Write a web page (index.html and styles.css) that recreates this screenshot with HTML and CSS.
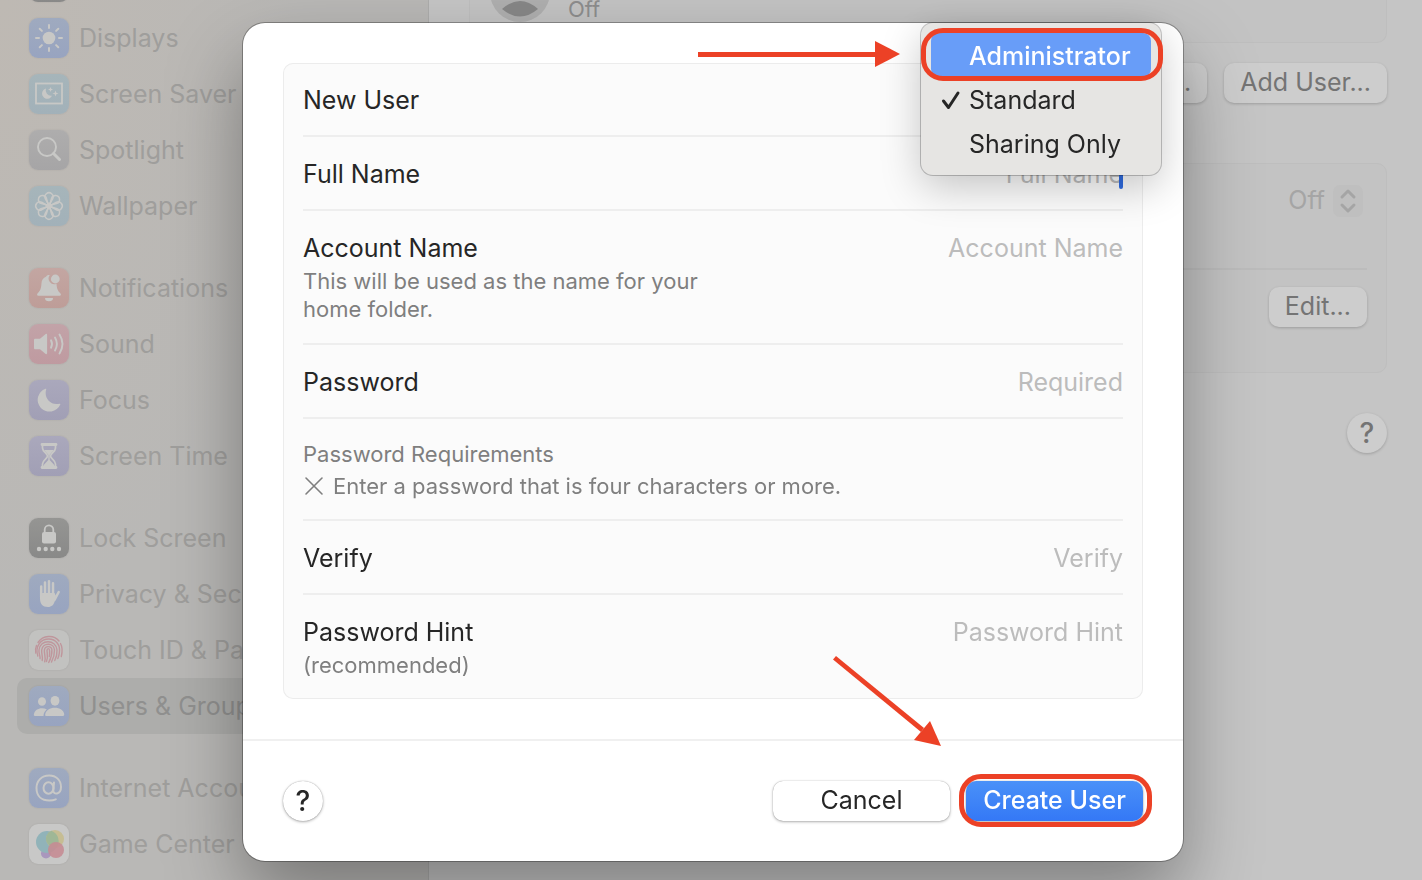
FILE: index.html
```html
<!DOCTYPE html>
<html lang="en">
<head>
  <meta charset="UTF-8">
  <title>Users &amp; Groups</title>
  <link rel="stylesheet" href="styles.css">
</head>
<body>
  <div class="window">
    <!-- Sidebar -->
    <nav class="sidebar">
      <div class="group">
        <a class="item" href="#" aria-label="Dock"><span class="icon dark"></span></a>
        <a class="item" href="#">
          <svg class="icon blue" viewBox="0 0 40 40"><circle cx="20" cy="20" r="6.3" fill="currentColor"/><path d="M20 7v3M20 30v3M7 20h3M30 20h3M10.700 10.700l2.200 2.200M27.100 27.100l2.200 2.200M29.300 10.700l-2.200 2.200M12.900 27.100l-2.200 2.200" stroke="currentColor" stroke-width="2" stroke-linecap="round"/></svg>
          Displays
        </a>
        <a class="item" href="#">
          <svg class="icon cyan" viewBox="0 0 40 40"><rect x="7" y="9.500" width="26" height="20" fill="none" stroke="currentColor" stroke-width="1.800"/><path d="M17 14.500a5.200 5.200 0 1 0 6 7.200a5.400 5.400 0 0 1-6-7.200z" fill="currentColor"/><path d="M21.500 13l.7 1.800 1.800.7-1.800.7-.7 1.800-.7-1.800-1.800-.7 1.800-.7zM26.500 16.500l.8 2.200 2.200.8-2.200.8-.8 2.200-.8-2.200-2.200-.8 2.200-.8z" fill="currentColor"/></svg>
          Screen Saver
        </a>
        <a class="item" href="#">
          <svg class="icon gray" viewBox="0 0 40 40"><circle cx="18" cy="17" r="9" fill="none" stroke="currentColor" stroke-width="1.900"/><path d="M24.500 23.500l6 6" stroke="currentColor" stroke-width="3" stroke-linecap="round"/></svg>
          Spotlight
        </a>
        <a class="item" href="#">
          <svg class="icon cyan" viewBox="0 0 40 40"><g fill="none" stroke="currentColor" stroke-width="1.500"><circle cx="20" cy="20" r="2"/><path id="petal" d="M20 19L16.500 13A4.100 4.100 0 1 1 23.500 13z"/><use href="#petal" transform="rotate(45 20 20)"/><use href="#petal" transform="rotate(90 20 20)"/><use href="#petal" transform="rotate(135 20 20)"/><use href="#petal" transform="rotate(180 20 20)"/><use href="#petal" transform="rotate(225 20 20)"/><use href="#petal" transform="rotate(270 20 20)"/><use href="#petal" transform="rotate(315 20 20)"/></g></svg>
          Wallpaper
        </a>
      </div>
      <div class="group">
        <a class="item" href="#">
          <svg class="icon red" viewBox="0 0 40 40"><path d="M20.800 7.100a5.700 5.700 0 0 0 6.700 8.700c.3 5.200 1.500 7.200 3.600 9.200 1.400 1.400.9 2.800-.6 2.800H9.500c-1.500 0-2-1.400-.6-2.800 2.300-2.300 3.200-4.300 3.500-9 .2-4 1.800-6.300 4.600-7.300.9-1.500 2.300-2.100 3.800-1.600zM16 30h8a4 3.300 0 0 1-8 0z" fill="currentColor"/><circle cx="26.300" cy="11" r="4.400" fill="currentColor"/></svg>
          Notifications
        </a>
        <a class="item" href="#">
          <svg class="icon pink" viewBox="0 0 40 40"><path d="M5 16c0-.8.500-1.300 1.300-1.300H11l5.700-4.600c.7-.5 1.400-.2 1.400.6v18.600c0 .8-.7 1.100-1.400.6L11 25.300H6.300c-.8 0-1.300-.5-1.300-1.300z" fill="currentColor"/><path d="M22 16.300q2 3.700 0 7.400M26 13.500q3.800 6.500 0 13M30.500 10.500q6 9.500 0 19" fill="none" stroke="currentColor" stroke-width="1.900" stroke-linecap="round"/></svg>
          Sound
        </a>
        <a class="item" href="#">
          <svg class="icon indigo" viewBox="0 0 40 40"><path d="M16.500 8.700c.5-.2.900.1.700.7-2.600 8.400 4.100 16.600 13.400 14.300.6-.1.900.3.700.8A11.800 11.800 0 1 1 16.500 8.700z" fill="currentColor"/></svg>
          Focus
        </a>
        <a class="item" href="#">
          <svg class="icon indigo" viewBox="0 0 40 40"><path d="M13 8.500h14M13 31.500h14" stroke="currentColor" stroke-width="2.800" stroke-linecap="round"/><path d="M13.500 9v3c0 4 5 5.500 5 8s-5 4-5 8v3M26.500 9v3c0 4-5 5.500-5 8s5 4 5 8v3" fill="none" stroke="currentColor" stroke-width="1.700"/><path d="M15 14h10l-4.300 4.800V24l4.800 5.300v1.200h-11v-1.200l4.800-5.300v-5.200z" fill="currentColor"/></svg>
          Screen Time
        </a>
      </div>
      <div class="group">
        <a class="item" href="#">
          <svg class="icon dark" viewBox="0 0 40 40"><rect x="13" y="14" width="14" height="11.500" rx="2" fill="currentColor"/><path d="M15.700 15v-3.300a4.300 4.300 0 0 1 8.600 0V15" fill="none" stroke="currentColor" stroke-width="1.800"/><g fill="currentColor"><circle cx="10" cy="31" r="2.200"/><circle cx="16.700" cy="31" r="2.200"/><circle cx="23.300" cy="31" r="2.200"/><circle cx="30" cy="31" r="2.200"/></g></svg>
          Lock Screen
        </a>
        <a class="item" href="#">
          <svg class="icon blue" viewBox="0 0 40 40"><path d="M11 19h14.500l1.500 3-1 4c-1 5-3.500 7-7 7-5.500 0-8-3.500-8-8.500z" fill="currentColor"/><path d="M12.200 23V12.500M16 21V8.500M20 21V7.200M24 21V9.300M25.500 26l4.200-8" fill="none" stroke="currentColor" stroke-width="2.500" stroke-linecap="round"/></svg>
          Privacy &amp; Security
        </a>
        <a class="item" href="#">
          <svg class="icon touch" viewBox="0 0 40 40"><g fill="none" stroke="currentColor" stroke-width="1.400" stroke-linecap="round"><path d="M9 12.500C14 5 25 4.500 30 11"/><path d="M6.800 23c-.8-3-.3-5 .7-7.500M31.500 13.500c2 3.500 2 8 .8 13"/><path d="M8.800 26c-3-10 3-17 11-17 7 0 12 6 10.500 14-.3 2.500-.8 4-1.500 5.500"/><path d="M11 28.500c.5-2.500-1.500-4.500-1-8.500 1-11 17-11 18 0 .2 4-.7 7.500-2.200 10.500"/><path d="M13.200 30.500c1-3.500-1-6.500-.5-10.500 1-8 12.500-7.500 12.800 0 .1 4.500-1 8-3 12"/><path d="M15.700 31.800c1.500-4.800-.8-8-.3-11.800.6-4.600 7.200-4.500 7.500 0 .2 4.500-1 8.500-3.200 12.500"/><path d="M17.500 31.500c1.800-4 .6-8 .5-11 0-2.500 2.500-2.500 2.600 0 .1 2.500 0 4-.3 6"/></g></svg>
          Touch ID &amp; Password
        </a>
        <a class="item selected" href="#">
          <svg class="icon blue" viewBox="0 0 40 40"><g fill="currentColor"><ellipse cx="13" cy="15.500" rx="4" ry="4.300"/><ellipse cx="26" cy="14.800" rx="4.400" ry="4.900"/><path d="M17 30c-.8 0-1-.8-.8-1.700.8-4 4.600-6.500 9.600-6.500s9 2.500 9.400 6.500c.1.900-.3 1.700-1.200 1.700z"/><path d="M6 30c-1 0-1.300-.8-1.100-1.700.7-3.800 4-6 8.100-6 1.900 0 3.500.4 4.800 1.200-2 1.600-3.300 3.800-3.300 6.500z"/></g></svg>
          Users &amp; Groups
        </a>
      </div>
      <div class="group">
        <a class="item" href="#">
          <svg class="icon blue" viewBox="0 0 40 40"><g fill="none" stroke="currentColor" stroke-width="2" stroke-linecap="round"><ellipse cx="19.500" cy="20" rx="5" ry="5.700"/><path d="M25 14.500l-.7 8c-.2 4.500 7.700 4.500 7.700-3.500 0-7-5-11.500-11.800-11.500C12.500 7.500 7.500 13 7.500 20c0 8 5 12.500 13 12.500 2.300 0 4.500-.4 6.300-1.200"/></g></svg>
          Internet Accounts
        </a>
        <a class="item" href="#">
          <svg class="icon white" viewBox="0 0 40 40"><circle cx="17" cy="29.500" r="5" fill="#a997bd"/><circle cx="18" cy="18" r="11" fill="#91b3b9"/><circle cx="26" cy="15" r="9" fill="#c5bb89" opacity=".85"/><path d="M27.300 23.800A11 11 0 0 1 17.300 17a9 9 0 0 1 5-10.300 11 11 0 0 1 5 17.100z" fill="#9fb796"/><circle cx="27" cy="26" r="8" fill="#c58c94" opacity=".9"/></svg>
          Game Center
        </a>
      </div>
    </nav>

    <!-- Users & Groups pane -->
    <main class="pane">
      <section class="card user-row">
        <svg class="avatar" viewBox="0 0 60 60"><circle cx="30" cy="30" r="30" fill="#afafaf"/><path d="M12 47q18-16 36 0-18 15-36 0z" fill="#878787"/></svg>
        <span>Off</span>
      </section>
      <div class="pane-buttons">
        <button class="btn">Add Group...</button>
        <button class="btn">Add User...</button>
      </div>
      <section class="card">
        <div class="card-row">
          <span>Off</span>
          <button class="stepper" aria-label="Automatic login">
            <svg viewBox="0 0 30 32"><path d="M9 12l6-6 6 6M9 20l6 6 6-6" fill="none" stroke="currentColor" stroke-width="3" stroke-linecap="round" stroke-linejoin="round"/></svg>
          </button>
        </div>
        <div class="card-row">
          <button class="btn">Edit...</button>
        </div>
      </section>
      <button class="help">?</button>
    </main>
  </div>

  <!-- New user dialog -->
  <div class="overlay">
    <form class="dialog">
      <div class="dialog-body">
        <div class="fields">
          <div class="row">
            <span class="name" id="type-label">New User</span>
          </div>
          <div class="row">
            <label class="name" for="full-name">Full Name</label>
            <div class="field">
              <input id="full-name" type="text" placeholder="Full Name">
              <span class="caret"></span>
            </div>
          </div>
          <div class="row">
            <div>
              <label class="name" for="account-name">Account Name</label>
              <p class="hint">This will be used as the name for your<br>home folder.</p>
            </div>
            <div class="field"><input id="account-name" type="text" placeholder="Account Name"></div>
          </div>
          <div class="row">
            <label class="name" for="password">Password</label>
            <div class="field"><input id="password" type="password" placeholder="Required"></div>
          </div>
          <div class="row requirements">
            <div>
              <p>Password Requirements</p>
              <p class="rule">
                <svg class="cross" viewBox="0 0 22 22"><path d="M3 3l16 16M19 3L3 19" stroke="currentColor" stroke-width="1.600" stroke-linecap="round"/></svg>
                Enter a password that is four characters or more.
              </p>
            </div>
          </div>
          <div class="row">
            <label class="name" for="verify">Verify</label>
            <div class="field"><input id="verify" type="password" placeholder="Verify"></div>
          </div>
          <div class="row">
            <div>
              <label class="name" for="password-hint">Password Hint</label>
              <p class="hint">(recommended)</p>
            </div>
            <div class="field"><input id="password-hint" type="text" placeholder="Password Hint"></div>
          </div>
        </div>
      </div>

      <div class="dialog-footer">
        <button type="button" class="help">?</button>
        <div class="actions">
          <button type="button" class="btn">Cancel</button>
          <button type="submit" class="btn primary">Create User</button>
        </div>
      </div>

      <!-- Account type menu -->
      <div class="menu" role="listbox" aria-labelledby="type-label">
        <button type="button" class="option active" role="option">Administrator</button>
        <button type="button" class="option" role="option" aria-selected="true">
          <svg class="check" viewBox="0 0 20 20"><path d="M2.500 11l5 6.500L17 3" fill="none" stroke="currentColor" stroke-width="3" stroke-linecap="round" stroke-linejoin="round"/></svg>
          Standard
        </button>
        <button type="button" class="option" role="option">Sharing Only</button>
      </div>

      <svg class="arrow arrow-type" viewBox="0 0 202 26"><path d="M0 11h178v5H0z"/><path d="M177 0l25 13-25 13z"/></svg>
      <svg class="arrow arrow-create" viewBox="0 0 108 92"><path d="M0 3.500L3 0 91 72l-3 4z"/><path d="M97 65l11 25-27-6z"/></svg>
    </form>
  </div>
</body>
</html>
```
FILE: styles.css
```css
* {
  box-sizing: border-box;
}

body {
  margin: 0;
  height: 100vh;
  overflow: hidden;
  font-family: Inter, "Open Sans", sans-serif;
  font-size: 25px;
  line-height: 30px;
  color: #262626;
}

p {
  margin: 0;
}

button,
input {
  font: inherit;
  color: inherit;
}

.window {
  display: grid;
  grid-template-columns: 429px 1fr;
  height: 100%;
  background-color: #c5c5c5;
}

/* Sidebar */
.sidebar {
  display: flex;
  flex-direction: column;
  justify-content: flex-end;
  gap: 26px;
  padding: 0 18px 8px 17px;
  overflow: hidden;
  border-right: 1px solid #adadac;
  background: radial-gradient(ellipse at top left, #beb9b3, #b9b8b6 50%);
}

.item {
  display: flex;
  align-items: center;
  gap: 10px;
  height: 56px;
  padding: 0 12px;
  border-radius: 10px;
  color: #9f9e9c;
  text-decoration: none;
  white-space: nowrap;
}

.item.selected {
  background-color: #adadab;
  color: #90908f;
}

.icon {
  width: 40px;
  height: 40px;
  flex: none;
  border-radius: 9px;
  color: #c8c8c6;
  box-shadow: 0 0 2px rgba(0, 0, 0, 0.1);
}

.blue { background: linear-gradient(#9faabf, #98a4c0); }
.cyan { background: linear-gradient(#a6b5ba, #a2b1b9); }
.gray { background: linear-gradient(#aeadad, #a6a5a6); }
.red { background: linear-gradient(#c3a6a2, #be9d98); }
.pink { background: linear-gradient(#c2a3a8, #bf9aa0); }
.indigo { background: linear-gradient(#aaa8bc, #a19fb5); }
.dark { background: linear-gradient(#959593, #898988); }
.white { background: #c8c8c7; }

.touch {
  background: #c2c2c0;
  color: #bf969c;
}

/* Right pane */
.pane {
  display: flex;
  flex-direction: column;
  padding: 0 35px 0 40px;
}

.card {
  padding: 0 19px;
  border: 1px solid #bebebe;
  border-radius: 10px;
  background-color: #c3c3c3;
  color: #a5a5a5;
}

.user-row {
  display: flex;
  align-items: flex-end;
  gap: 18px;
  height: 43px;
  padding: 0 20px 20px;
  border-top: 0;
  border-radius: 0 0 10px 10px;
  font-size: 22px;
  line-height: 26px;
  color: #8d8d8d;
}

.avatar {
  width: 60px;
  height: 60px;
}

.pane-buttons {
  display: flex;
  justify-content: flex-end;
  gap: 17px;
  padding: 20px 0 60px;
}

.card-row {
  display: flex;
  justify-content: flex-end;
  gap: 8px;
  height: 104px;
  padding: 18px 0;
}

.card-row > span {
  line-height: 36px;
}

.card-row + .card-row {
  padding-top: 17px;
  border-top: 2px solid #bcbcbc;
}

.stepper {
  width: 30px;
  height: 32px;
  margin: 3px 4px 0 0;
  padding: 0;
  border: 0;
  border-radius: 7px;
  background-color: #bfbfbf;
}

.stepper svg {
  display: block;
}

.btn {
  height: 40px;
  padding: 0 16px 2px;
  border: 0;
  border-radius: 10px;
  background-color: #cdcdcd;
  box-shadow: 0 1px 3px rgba(0, 0, 0, 0.2);
  color: #747474;
  line-height: 38px;
}

.help {
  width: 40px;
  height: 40px;
  padding: 0;
  border: 0;
  border-radius: 50%;
  background-color: #cdcdcd;
  box-shadow: 0 1px 3px rgba(0, 0, 0, 0.2);
  color: #747474;
  font-size: 28px;
  font-weight: 500;
}

.pane > .help {
  align-self: flex-end;
  margin-top: 40px;
}

/* Dialog */
.overlay {
  position: fixed;
  inset: 0;
  display: flex;
  justify-content: center;
  align-items: flex-start;
  padding: 23px 0 0 4px;
}

.dialog {
  position: relative;
  width: 940px;
  max-width: 100%;
  border-radius: 22px;
  background-color: #fff;
  box-shadow: 0 0 0 1px rgba(0, 0, 0, 0.3), 0 36px 76px rgba(0, 0, 0, 0.35);
}

.dialog-body {
  padding: 40px;
}

.fields {
  padding: 0 20px;
  border-radius: 10px;
  background-color: #fbfbfb;
  box-shadow: inset 0 0 0 1px #ececec;
}

.row {
  display: flex;
  justify-content: space-between;
  padding: 22px 0 20px;
  border-bottom: 2px solid #eee;
}

.row:last-child {
  border-bottom: 0;
}

.name {
  display: block;
}

.hint,
.requirements {
  font-size: 22px;
  line-height: 28px;
  color: #7f7f7f;
}

.hint {
  margin-top: 4px;
}

.row.requirements {
  padding: 21px 0 19px;
}

.rule {
  display: flex;
  align-items: center;
  gap: 8px;
  margin-top: 4px;
}

.cross {
  width: 22px;
  height: 22px;
}

.field {
  position: relative;
  height: 30px;
}

.field input {
  display: block;
  width: 340px;
  height: 30px;
  padding: 0;
  border: 0;
  outline: 0;
  background: none;
  text-align: right;
}

.field input::placeholder {
  color: #bcbcbc;
  opacity: 1;
}

.caret {
  position: absolute;
  right: 0;
  bottom: 0;
  width: 4px;
  height: 30px;
  border-radius: 2px;
  background-color: #2f6be0;
}

.dialog-footer {
  display: flex;
  justify-content: space-between;
  padding: 40px;
  border-top: 2px solid #f0f0f0;
}

.actions {
  display: flex;
  gap: 16px;
}

.dialog .btn,
.dialog .help {
  background-color: #fff;
  box-shadow: 0 0 1px rgba(0, 0, 0, 0.4), 0 1px 3px rgba(0, 0, 0, 0.3);
  color: #262626;
}

.dialog .btn {
  width: 177px;
  padding: 0 0 2px;
}

.dialog .primary {
  position: relative;
  background: linear-gradient(#4a91f8, #3478f6);
  color: #fff;
  font-weight: 500;
}

/* Account type menu */
.menu {
  position: absolute;
  top: 0;
  right: 22px;
  width: 240px;
  padding: 10px;
  border-radius: 12px;
  background-color: #e6e5e3;
  box-shadow: 0 0 0 1px rgba(0, 0, 0, 0.22), 0 12px 40px rgba(0, 0, 0, 0.22);
}

.option {
  position: relative;
  display: block;
  width: 100%;
  height: 44px;
  padding: 2px 0 0 38px;
  border: 0;
  border-radius: 8px;
  background: none;
  text-align: left;
  white-space: nowrap;
}

.option.active {
  background-color: #689df8;
  color: #fff;
  font-weight: 500;
}

.check {
  position: absolute;
  top: 13px;
  left: 10px;
  width: 20px;
  height: 20px;
}

/* Red call-outs */
.option.active::after,
.primary::after {
  content: "";
  position: absolute;
  inset: -5px -12px -4px -10px;
  border: 5px solid #ec4126;
  border-radius: 22px;
}

.primary::after {
  inset: -7px -9px -6px -7px;
}

.arrow {
  position: absolute;
  fill: #ec4126;
}

.arrow-type {
  top: 18px;
  left: 455px;
  width: 202px;
  height: 26px;
}

.arrow-create {
  top: 633px;
  left: 590px;
  width: 108px;
  height: 92px;
}
```
